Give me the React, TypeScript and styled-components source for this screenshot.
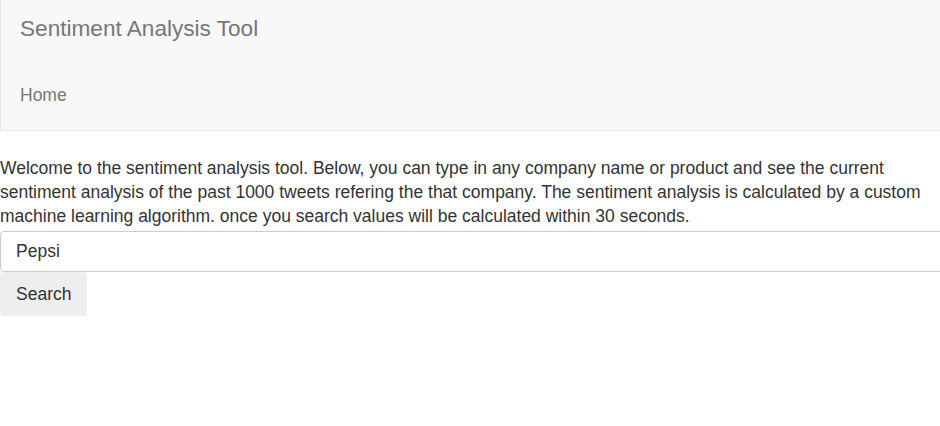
import React, { useState } from "react";
import styled, { createGlobalStyle } from "styled-components";

const GlobalStyle = createGlobalStyle`
  html, body {
    margin: 0;
    padding: 0;
    background: #fff;
    overflow: hidden;
  }

  body {
    font-family: "Liberation Sans", Arial, Helvetica, sans-serif;
    font-size: 17.5px;
    color: #333;
  }
`;

function App() {
  const [query, setQuery] = useState("Pepsi");

  return (
    <>
      <GlobalStyle />
      <Page>
        <Navbar>
          <Brand href="#">Sentiment Analysis Tool</Brand>
          <NavList>
            <NavItem>
              <NavLink href="#">Home</NavLink>
            </NavItem>
          </NavList>
        </Navbar>

        <Intro>
          Welcome to the sentiment analysis tool. Below, you can type in any company name or product and see the current
          sentiment analysis of the past 1000 tweets refering the that company. The sentiment analysis is calculated by a
          custom machine learning algorithm. once you search values will be calculated within 30 seconds.
        </Intro>

        <SearchForm onSubmit={e => e.preventDefault()}>
          <SearchInput type="text" value={query} onChange={e => setQuery(e.target.value)} />
          <SearchButton type="submit">Search</SearchButton>
        </SearchForm>
      </Page>
    </>
  );
}

const Page = styled.div`
  width: 960px;
`;

const Navbar = styled.nav`
  height: 131px;
  box-sizing: border-box;
  display: flex;
  flex-direction: column;
  background-color: #f8f8f8;
  border: 1px solid #e7e7e7;
  border-top: none;
`;

const Brand = styled.a`
  display: block;
  height: 58px;
  line-height: 58px;
  padding: 0 19px;
  font-size: 22.6px;
  color: #777;
  text-decoration: none;
`;

const NavList = styled.ul`
  margin: 14px 0 0;
  padding: 0;
  list-style: none;
  display: flex;
`;

const NavItem = styled.li`
  display: block;
`;

const NavLink = styled.a`
  display: block;
  height: 46px;
  line-height: 46px;
  padding: 0 19px;
  font-size: 17.5px;
  color: #777;
  text-decoration: none;
`;

const Intro = styled.p`
  margin: 25px 0 3px;
  width: 940px;
  line-height: 24px;
  color: #333;
`;

const SearchForm = styled.form`
  display: flex;
  flex-direction: column;
  align-items: flex-start;
`;

const SearchInput = styled.input`
  width: 100%;
  height: 41px;
  box-sizing: border-box;
  padding: 0 15px;
  border: 1px solid #ccc;
  border-radius: 4px;
  font-family: inherit;
  font-size: 17.5px;
  color: #333;
  background: #fff;
  outline: none;
`;

const SearchButton = styled.button`
  height: 44px;
  padding: 0 16px;
  border: none;
  border-radius: 4px;
  background-color: #eee;
  font-family: inherit;
  font-size: 17.5px;
  color: #333;
  cursor: pointer;
`;

export default App;
